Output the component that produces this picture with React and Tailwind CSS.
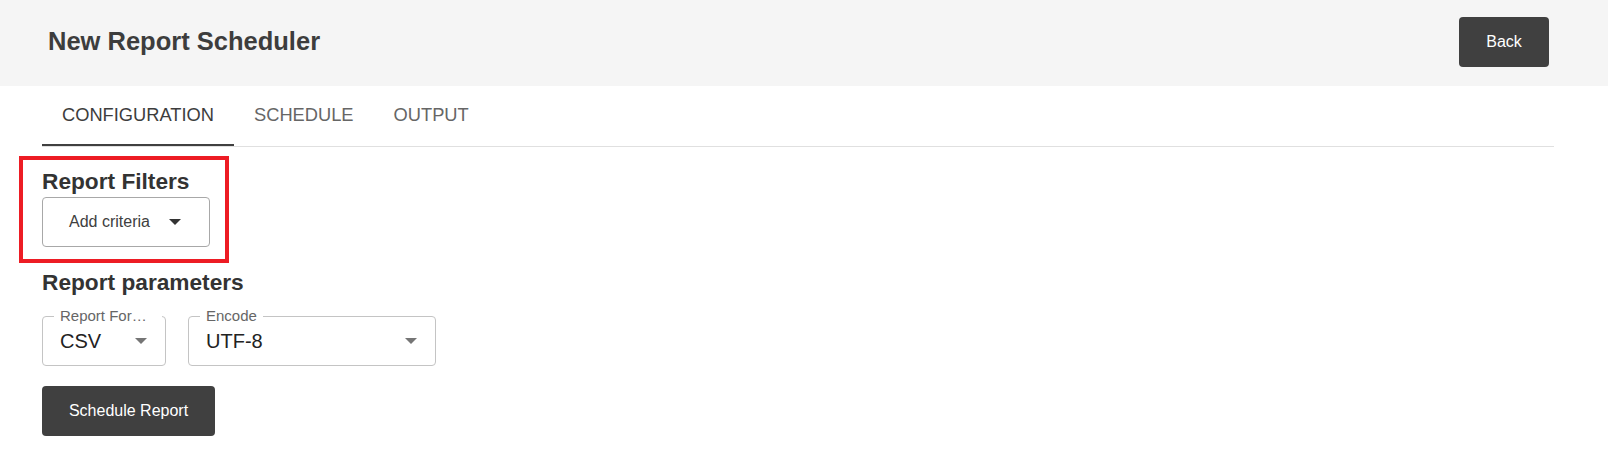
import React from "react";

const Caret = ({ className }) => (
  <svg width="12" height="6" viewBox="0 0 12 6" className={className}>
    <path d="M0 0h12L6 6z" fill="currentColor" />
  </svg>
);

const OutlinedSelect = ({ label, value, width }) => (
  <div
    className={`relative h-[50px] ${width} rounded-[4px] border border-[#c4c4c4] flex items-center justify-between pl-[17px] pr-[18px]`}
  >
    <span className="absolute -top-[10px] left-[11px] px-[6px] bg-white text-[15px] leading-[18px] text-[#666] max-w-[108px] truncate">
      {label}
    </span>
    <span className="text-[20px] text-[#222]">{value}</span>
    <Caret className="text-[#757575]" />
  </div>
);

export default function App() {
  const tabs = ["Configuration", "Schedule", "Output"];
  const active = 0;

  return (
    <div className="relative min-h-[470px] bg-white font-['Liberation_Sans',Arial,sans-serif]">
      {/* Header */}
      <div className="h-[86px] bg-[#f5f5f5] flex items-center justify-between pl-12 pr-[59px] pb-1">
        <h1 className="text-[25.5px] font-bold text-[#3d3d3d]">New Report Scheduler</h1>
        <button className="w-[90px] h-[50px] rounded-[4px] bg-[#404040] text-white text-[16px] mt-[2px]">
          Back
        </button>
      </div>

      <div className="pl-[42px] pr-[54px]">
        {/* Tabs */}
        <div className="flex border-b border-[#e0e0e0]">
          {tabs.map((t, i) => (
            <div
              key={t}
              className={`h-[60px] px-5 flex items-center uppercase text-[18.3px] border-b-2 ${
                i === active ? "border-[#404040] text-[#3d3d3d]" : "border-transparent text-[#666]"
              }`}
            >
              {t}
            </div>
          ))}
        </div>

        {/* Report filters */}
        <h2 className="mt-[21px] text-[22.7px] leading-[26px] font-bold text-[#333]">Report Filters</h2>
        <button className="mt-[3px] w-[168px] h-[50px] rounded-[4px] border border-[#a8a8a8] flex items-center pl-[26px] text-[16px] text-[#404040]">
          Add criteria
          <Caret className="ml-[19px] text-[#333]" />
        </button>

        {/* Report parameters */}
        <h2 className="mt-[22px] text-[22.7px] leading-[26px] font-bold text-[#333]">Report parameters</h2>
        <div className="mt-[21px] flex gap-[22px]">
          <OutlinedSelect label="Report Format" value="CSV" width="w-[124px]" />
          <OutlinedSelect label="Encode" value="UTF-8" width="w-[248px]" />
        </div>

        <button className="mt-[20px] h-[50px] w-[173px] rounded-[4px] bg-[#404040] text-white text-[16px]">
          Schedule Report
        </button>
      </div>

      {/* Highlight annotation */}
      <div className="absolute left-[19px] top-[156px] w-[210px] h-[107px] border-4 border-[#ed1c24] pointer-events-none" />
    </div>
  );
}
